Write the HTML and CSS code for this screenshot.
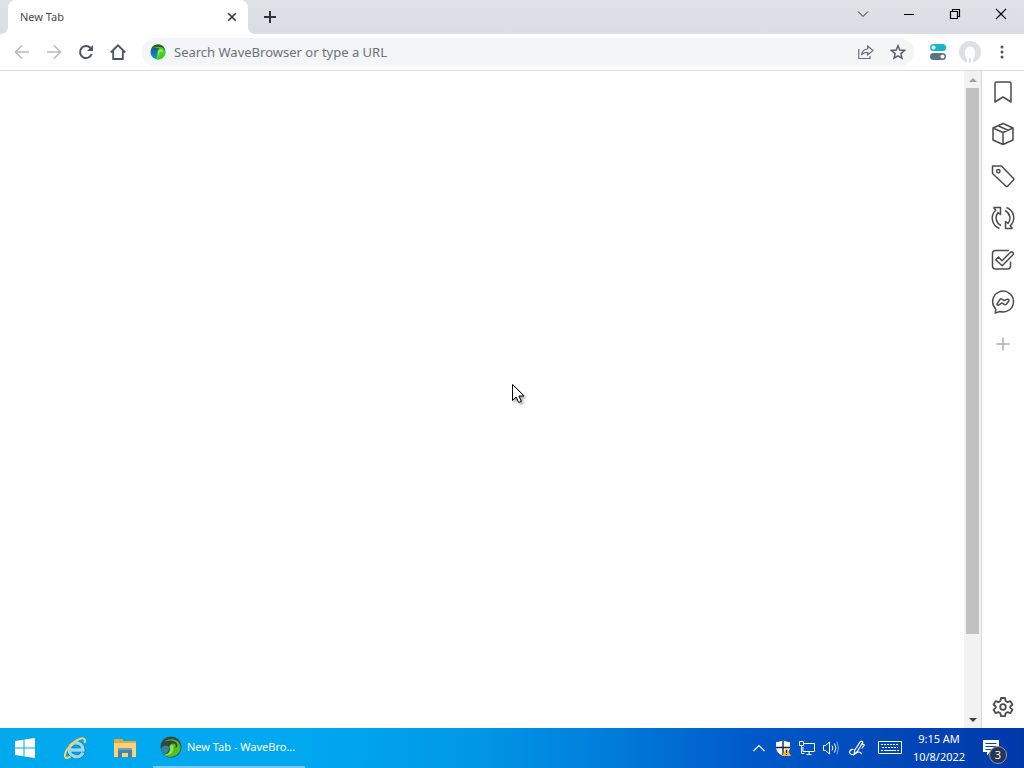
FILE: index.html
```html
<!DOCTYPE html>
<html lang="en">
<head>
<meta charset="utf-8">
<title>New Tab</title>
<link rel="stylesheet" href="styles.css">
</head>
<body>
<svg class="defs" aria-hidden="true">
  <defs>
    <linearGradient id="blue" x1="0" y1="0" x2="0" y2="1"><stop offset="0" stop-color="#17496b"/><stop offset="1" stop-color="#1597ec"/></linearGradient>
    <symbol id="wave" viewBox="0 0 16 16">
      <circle cx="8" cy="8" r="7.500" fill="url(#blue)"/>
      <path d="M1.500 4.500C4 1.500 9 1 12.500 3.500c4 3 3.500 8.500-.5 11-2.500 1.500-5 1.200-7 .3C8.500 13.500 9 11 8 9c-.7-2 0-3.500 1.500-4.200C7 3.500 4 3.500 1.500 4.500z" fill="#46cf1b"/>
      <path d="M1.200 4.800C2.500 2 5 .5 8 .5c3.500 0 6 2 7 4.700C12 1.800 6 2 1.200 4.800z" fill="#285e28"/>
      <path d="M7.500 9c0-3 2.500-4.300 4.500-3.600 1.800.8 1.800 3-.1 3.500.2-1.500-2.100-1.600-2.500.2-.2 2.300-1 4-3 5.200C7.800 12.500 7.500 11 7.500 9z" fill="#8df03e"/>
    </symbol>
    <symbol id="wave-dark" viewBox="0 0 22 22">
      <circle cx="11" cy="11" r="10.500" fill="#36443b"/>
      <path d="M1 13.500C2 9.500 6 8.500 8.500 10.500c2 2 .5 5.500-4.500 8C2.500 17.200 1.300 15.500 1 13.500z" fill="#2e88a0"/>
      <path d="M2.500 7C6 3 12 2 16.500 4.500c5 3 5.500 9.500 1.500 13.200-4 4-10 4-14 1C8.500 18 11 15 9.500 11c-.3-2 1.500-3.500 3.500-3.500 3 0 4 3.500 1.500 4.500 3.200 0 4-3.700 1.500-5.500C12.500 3.800 7 4 2.500 7z" fill="#50bf26"/>
      <path d="M4 18.800c4.800-.3 7.500-3.300 5.800-7.800.2-2 3.200-2.500 4 0-1 .5-1 1.500-.3 2-.5 4-4 7.300-9.500 5.800z" fill="#91e247"/>
    </symbol>
  </defs>
</svg>

<header class="tabstrip">
  <div class="tab">
    <span class="tab-title">New Tab</span>
    <button class="icon-btn tab-close" aria-label="Close tab"><svg width="10" height="10" viewBox="0 0 10 10"><path d="M1.200 1.200l7.600 7.600M8.800 1.200L1.200 8.800" stroke="#333639" stroke-width="1.600"/></svg></button>
  </div>
  <button class="icon-btn new-tab" aria-label="New tab"><svg width="14" height="14" viewBox="0 0 14 14"><path d="M7 1v12M1 7h12" stroke="#303338" stroke-width="2"/></svg></button>
  <div class="window-controls">
    <button class="icon-btn" aria-label="Search tabs"><svg width="12" height="12" viewBox="0 0 12 12"><path d="M1 3.500l5 5 5-5" stroke="#222" fill="none"/></svg></button>
    <button class="icon-btn" aria-label="Minimize"><svg width="12" height="12" viewBox="0 0 12 12"><path d="M1 6.500h10" stroke="#000"/></svg></button>
    <button class="icon-btn" aria-label="Restore"><svg width="12" height="12" viewBox="0 0 12 12"><path d="M1.500 3.500h7v7h-7zM3.500 3.500v-2h7v7h-2" stroke="#000" fill="none" stroke-width="1.200"/></svg></button>
    <button class="icon-btn" aria-label="Close"><svg width="12" height="12" viewBox="0 0 12 12"><path d="M1 1l10 10M11 1L1 11" stroke="#000" stroke-width="1.100"/></svg></button>
  </div>
</header>

<nav class="toolbar">
  <button class="icon-btn" aria-label="Back"><svg width="16" height="16" viewBox="0 0 16 16"><path d="M15 8H2M8 1.500L1.500 8 8 14.500" stroke="#b9bbbd" stroke-width="1.700" fill="none"/></svg></button>
  <button class="icon-btn" aria-label="Forward"><svg width="16" height="16" viewBox="0 0 16 16"><path d="M1 8h13M8 1.500L14.500 8 8 14.500" stroke="#b9bbbd" stroke-width="1.700" fill="none"/></svg></button>
  <button class="icon-btn" aria-label="Reload"><svg width="16" height="16" viewBox="0 0 16 16"><path d="M13.700 10A6 6 0 1 1 12.500 4" stroke="#505357" stroke-width="2" fill="none"/><path d="M15 1v6H9z" fill="#505357"/></svg></button>
  <button class="icon-btn" aria-label="Home"><svg width="16" height="16" viewBox="0 0 16 16"><path d="M.8 8.500L8 1.300l7.200 7.200M3.200 7v8h9.600V7" stroke="#505357" stroke-width="1.800" fill="none"/></svg></button>
  <div class="omnibox">
    <svg width="16" height="16"><use href="#wave"/></svg>
    <input class="address" type="text" aria-label="Address and search bar" placeholder="Search WaveBrowser or type a URL">
    <button class="icon-btn" aria-label="Share"><svg width="16" height="16" viewBox="0 0 16 16"><path d="M.8 5v9.500H12V12M3.500 11C4 7.500 6 5.200 9.700 5V2L15 6.500 9.700 11V8.300C7 8.300 5 9 3.500 11z" stroke="#6b6e72" stroke-width="1.200" fill="none"/></svg></button>
    <button class="icon-btn" aria-label="Bookmark this tab"><svg width="16" height="16" viewBox="0 0 16 16"><path d="M8 1.800l1.800 4.300 4.700.4-3.600 3.100 1.100 4.600L8 11.800l-4 2.400 1.100-4.600-3.600-3.100 4.700-.4z" stroke="#5a5d61" stroke-width="1.500" fill="none"/></svg></button>
  </div>
  <button class="icon-btn extension" aria-label="Extension"><svg width="16" height="16" viewBox="0 0 16 16"><rect y="0" width="16" height="7" rx="3.500" fill="#18b4cc"/><circle cx="3.500" cy="3.500" r="2" fill="#fff"/><rect y="9" width="16" height="7" rx="3.500" fill="#5a7484"/><circle cx="12.500" cy="12.500" r="2" fill="#fff"/></svg></button>
  <button class="icon-btn" aria-label="Profile"><svg width="22" height="22" viewBox="0 0 22 22"><circle cx="11" cy="11" r="11" fill="#dedfe0"/><path d="M8 22v-4C6 16 5.500 11 6.500 8.500c1.700-4 7.300-4 9 0 1 2.500.5 7.500-1.500 9.500v4h-2v-5h-2v5z" fill="#fff"/></svg></button>
  <button class="icon-btn" aria-label="Menu"><svg width="16" height="16" viewBox="0 0 16 16" fill="#505357"><circle cx="8" cy="3" r="1.500"/><circle cx="8" cy="8" r="1.500"/><circle cx="8" cy="13" r="1.500"/></svg></button>
</nav>

<div class="workspace">
  <main class="page"></main>
  <div class="scrollbar">
    <button class="icon-btn scroll-arrow" aria-label="Scroll up"><svg width="8" height="4" viewBox="0 0 8 4"><path d="M0 4l4-4 4 4z" fill="#a0a0a0"/></svg></button>
    <div class="scroll-track"><div class="scroll-thumb"></div></div>
    <button class="icon-btn scroll-arrow" aria-label="Scroll down"><svg width="8" height="4" viewBox="0 0 8 4"><path d="M0 0l4 4 4-4z" fill="#404040"/></svg></button>
  </div>
  <aside class="sidebar">
    <button class="icon-btn" aria-label="Bookmarks"><svg width="24" height="24" viewBox="0 0 24 24"><path d="M4 3.500q0-1.500 1.500-1.500h13q1.500 0 1.500 1.500v18.500l-8-5-8 5z"/></svg></button>
    <button class="icon-btn" aria-label="Packages"><svg width="24" height="24" viewBox="0 0 24 24"><path d="M12 1.500L22 6v12l-10 4.500L2 18V6zM2 6l10 4.500L22 6M12 10.500v12M7 3.700l10 4.500"/></svg></button>
    <button class="icon-btn" aria-label="Offers"><svg width="24" height="24" viewBox="0 0 24 24"><path d="M1.500 2h9l12 12.500q.7.700 0 1.400l-6 6.300q-.7.700-1.400 0L1.500 9.500z"/><circle cx="7.300" cy="7.300" r="1.700"/></svg></button>
    <button class="icon-btn" aria-label="Convert"><svg width="24" height="24" viewBox="0 0 24 24"><g id="turn"><path d="M2.500 1.500H9.500v7L7 6.500C3.500 11 5 17 10 19.500M2.500 1.500l2.300 2.700C-1 9.500.5 19.500 8.500 22.500"/></g><use href="#turn" transform="rotate(180 12 12)"/></svg></button>
    <button class="icon-btn" aria-label="Tasks"><svg width="24" height="24" viewBox="0 0 24 24"><path d="M18 2.500H4.500q-3 0-3 3v12.500q0 3 3 3h12q3 0 3-3v-4.500M4.700 11.800L7.500 9l3.500 3.700 8.500-8.500q1.400-.8 2.400.3 1 1.100.1 2.300L11.200 17.700z"/></svg></button>
    <button class="icon-btn" aria-label="Messenger"><svg width="24" height="24" viewBox="0 0 24 24"><path d="M9 21.500L4.200 23l.6-4A10.400 10.400 0 1 1 9 21.500z"/><path d="M6 14l3-4.600q.8-1 2-.3l1.700 1.200q.8.500 1.500-.1 2-1.500 3.300-.8.900.6.200 1.600L15.500 14q-1 1.200-2.200.4l-1.700-1.100q-.7-.5-1.400.1-2.300 2-3.700 1.700-.9-.3-.5-1.100z"/></svg></button>
    <button class="icon-btn" aria-label="Add"><svg width="24" height="24" viewBox="0 0 24 24"><path class="muted" d="M12 5.500v13M5.500 12h13"/></svg></button>
    <button class="icon-btn settings" aria-label="Settings"><svg width="24" height="24" viewBox="0 0 24 24"><circle cx="12" cy="12" r="2.800"/><path d="M10 3h4l.6 3 2 1.100 2.800-1 2 3.400-2.200 2v1.200l2.200 2-2 3.400-2.800-1-2 1.100-.6 3h-4l-.6-3-2-1.100-2.800 1-2-3.400 2.200-2v-1.200l-2.200-2 2-3.400 2.800 1 2-1.100z"/></svg></button>
  </aside>
</div>

<footer class="taskbar">
  <button class="icon-btn task-btn" aria-label="Start"><svg width="20" height="20" viewBox="0 0 20 20" fill="#fff"><path d="M0 3l8.500-1.200v7.700H0zM9.500 1.600L20 0v9.500H9.500zM0 10.500h8.500v7.700L0 17zM9.500 10.500H20V20L9.500 18.400z"/></svg></button>
  <button class="icon-btn task-btn" aria-label="Internet Explorer"><svg width="24" height="24" viewBox="0 0 24 24" fill="none"><path d="M20 16.500c-1.500 3.500-5 5-8.500 4-4.300-1.200-6.300-5-5-9 1.500-4 5.500-5.800 9.500-4 2.800 1.300 4 3.700 4 6.500H8" stroke="#32648c" stroke-width="4.600"/><path d="M20 16.500c-1.500 3.500-5 5-8.500 4-4.300-1.200-6.300-5-5-9 1.500-4 5.500-5.800 9.500-4 2.800 1.300 4 3.700 4 6.500H8" stroke="#8eddf7" stroke-width="3.400"/><path d="M21.500 7c1.500-4-1-6-5-4C9 6 1 15 2 20.500c.5 2.200 3 1.700 5.500.2" stroke="#f3d45c" stroke-width="2"/></svg></button>
  <button class="icon-btn task-btn" aria-label="File Explorer"><svg width="24" height="24" viewBox="0 0 24 24"><path d="M1 3h8l2 2h12v16H1z" fill="#e6aa36"/><path d="M1 7h22v14H1z" fill="#fbd27a"/><path d="M5 14q0-2 2-2h10q2 0 2 2v8h-4v-5H9v5H5z" fill="#4483ab"/><path d="M5 14q0-2 2-2h10q2 0 2 2z" fill="#70a0b9"/></svg></button>
  <button class="running-app"><svg width="22" height="22"><use href="#wave-dark"/></svg><span>New Tab - WaveBro...</span></button>
  <div class="tray">
    <button class="icon-btn" aria-label="Show hidden icons"><svg width="12" height="16" viewBox="0 0 12 16"><path d="M.5 11L6 5.500l5.500 5.500" stroke="#fff" fill="none" stroke-width="1.200"/></svg></button>
    <button class="icon-btn" aria-label="Security"><svg width="16" height="16" viewBox="0 0 16 16"><path d="M8 0c2 1.500 4.500 2 7 2v5c0 4-2.500 7-7 9-4.500-2-7-5-7-9V2c2.500 0 5-.5 7-2z" fill="#fff"/><path d="M8 0v16M1 7.500h14" stroke="#142448" stroke-width="1.400"/><path d="M11.500 7.500L16 16H7z" fill="#ffb632"/><path d="M11.500 10v3M11.500 14v1" stroke="#111"/></svg></button>
    <button class="icon-btn" aria-label="Network"><svg width="16" height="16" viewBox="0 0 16 16"><path d="M5 3.500h10.500v8H4V7M7.500 14.500h5M10 11.500v3M.5 1.500h4v4h-4zM2.500 5.500v8h3" stroke="#fff" fill="none"/></svg></button>
    <button class="icon-btn" aria-label="Volume"><svg width="16" height="16" viewBox="0 0 16 16"><path d="M.5 5.500h2l4-3.500v12l-4-3.500h-2zM9 5.500q1.800 2.500 0 5M11.500 3.500q3 4.500 0 9" stroke="#fff" fill="none"/><path d="M14 1.500q3 6.500 0 13" stroke="#80a5df" fill="none"/></svg></button>
    <button class="icon-btn pen" aria-label="Pen"><svg width="16" height="16" viewBox="0 0 16 16"><path d="M5 14.500L5.800 10l5.700-8.500q1.700-1 2.300.8L8.300 11.500zM13 3.500l2.200 1.500-2.400 3.500M4.500 9.500c-4.500-.5-5 5-1.500 5 3 .3 4.500-2.500 7-2.500 2 0 1.500 2 3 1.500" stroke="#fff" fill="none" stroke-width="1.200"/></svg></button>
    <button class="icon-btn keyboard" aria-label="Touch keyboard"><svg width="24" height="14" viewBox="0 0 24 14"><path d="M.5.5h23v12H.5z" stroke="#fff" fill="none"/><path d="M3 3.500h18M4 6.500h16" stroke="#fff" stroke-dasharray="2 1"/><path d="M3 9.500h2M6 9.500h12M19 9.500h2" stroke="#fff"/></svg></button>
    <button class="clock"><span>9:15 AM</span><span>10/8/2022</span></button>
    <button class="icon-btn notifications" aria-label="3 notifications"><svg width="16" height="16" viewBox="0 0 16 16"><path d="M0 0h16v12H7l-3 3.500V12H0z" fill="#fff"/><path d="M2.500 3.500h11M2.500 6.500h11M2.500 9.500h6" stroke="#0b3fab"/></svg><span class="badge">3</span></button>
  </div>
</footer>
<svg class="cursor" width="18" height="24" viewBox="0 0 18 24" aria-hidden="true"><path d="M.5.5v16l3.700-3.500 2.500 5.500 2.600-1.200L6.900 12H12z" fill="#fff" stroke="#000"/></svg>
</body>
</html>
```
FILE: styles.css
```css
* { box-sizing: border-box; }
body {
  margin: 0;
  height: 100vh;
  display: flex;
  flex-direction: column;
  overflow: hidden;
  background: #fff;
  font: 11px/18px "Noto Sans", "Open Sans", sans-serif;
  color: #45484c;
}
button { border: 0; padding: 0; background: none; font: inherit; color: inherit; }
svg { display: block; flex: none; }
.defs { position: absolute; width: 0; height: 0; }
.icon-btn { display: flex; align-items: center; justify-content: center; flex: none; }

.tabstrip { display: flex; flex: none; height: 34px; padding-left: 8px; background: linear-gradient(#dee1e6, #dadde3); }
.tab {
  position: relative;
  display: flex;
  align-items: center;
  width: 240px;
  padding: 0 8px 0 12px;
  background: #fff;
  border-radius: 8px 8px 0 0;
}
.tab::before, .tab::after { content: ""; position: absolute; bottom: 0; width: 8px; height: 8px; }
.tab::before { right: 100%; background: radial-gradient(circle at 0 0, transparent 8px, #fff 8px); }
.tab::after { left: 100%; background: radial-gradient(circle at 100% 0, transparent 8px, #fff 8px); }
.tab-title { flex: 1; }
.tab-close { width: 16px; height: 16px; }
.new-tab { width: 28px; margin-left: 8px; }
.window-controls { display: flex; margin-left: auto; height: 28px; }
.window-controls .icon-btn { width: 46px; }

.toolbar { display: flex; align-items: center; flex: none; height: 37px; padding: 0 6px; border-bottom: 1px solid #dcdcde; }
.toolbar .icon-btn { width: 32px; height: 32px; }
.omnibox {
  flex: 1;
  display: flex;
  align-items: center;
  height: 28px;
  margin: 0 8px;
  padding-left: 8px;
  border-radius: 14px;
  background: #f3f5f6;
}
.address { flex: 1; min-width: 0; height: 28px; margin: 0; padding: 0 8px; border: 0; outline: 0; background: none; font: 13px/20px "Noto Sans", "Open Sans", sans-serif; color: #333; }
.address::placeholder { color: #6e7276; opacity: 1; }

.workspace { display: flex; flex: 1; min-height: 0; }
.page { flex: 1; }
.scrollbar { display: flex; flex-direction: column; width: 17px; padding: 0 1px; background: #f2f2f2; }
.scroll-arrow { height: 17px; }
.scroll-track { flex: 1; }
.scroll-thumb { height: 87.7%; margin: 0 1px; background: #c1c1c1; }
.sidebar { display: flex; flex-direction: column; align-items: stretch; width: 43px; border-left: 1px solid #d8d8d8; }
.sidebar .icon-btn { height: 42px; }
.sidebar svg { fill: none; stroke: #4c4c4e; stroke-width: 1.5; stroke-linejoin: round; }
.sidebar .muted { stroke: #adadad; }
.sidebar .settings { margin-top: auto; }
.sidebar .settings svg { stroke-width: 1.8; }

.taskbar { display: flex; flex: none; height: 40px; color: #fff; background: linear-gradient(90deg, #00a8ee 0%, #00a8f0 30%, #0098e6 46%, #0080dc 58%, #0058c8 74%, #0038a8 100%); }
.task-btn { width: 50px; }
.running-app { display: flex; align-items: center; gap: 5px; width: 152px; margin-left: 3px; padding: 0 0 0 7px; border-bottom: 2px solid #78c8f5; white-space: nowrap; }
.tray { display: flex; align-items: center; margin-left: auto; padding-right: 9px; }
.tray .icon-btn { width: 24px; height: 40px; }
.tray .pen { margin-left: 2px; }
.tray .keyboard { width: 42px; }
.clock { display: flex; flex-direction: column; align-items: center; width: 56px; }
.tray .notifications { position: relative; width: 48px; }
.badge { position: absolute; right: 8px; bottom: 4px; width: 18px; height: 18px; border: 1px solid #8c9bb5; border-radius: 50%; background: #27344e; line-height: 16px; text-align: center; }
.cursor { position: absolute; left: 50%; top: 50%; filter: drop-shadow(2px 2px 1px #0005); }
```
